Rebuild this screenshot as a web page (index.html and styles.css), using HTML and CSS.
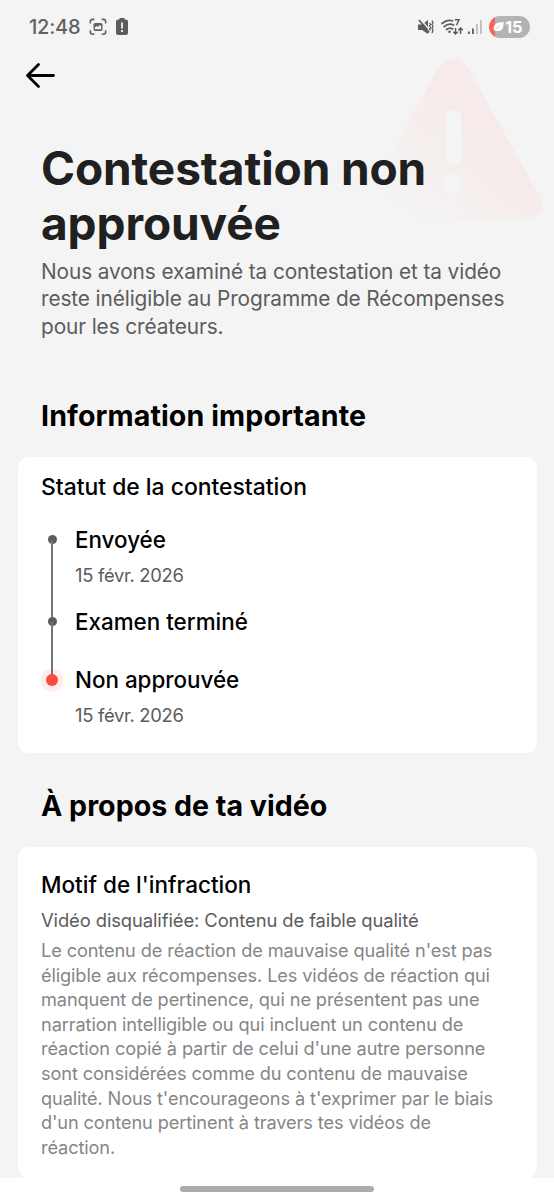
FILE: index.html
```html
<!DOCTYPE html>
<html lang="fr">
<head>
    <meta charset="UTF-8">
    <title>Contestation non approuvée</title>
    <meta name="viewport" content="width=device-width, initial-scale=1.0">
    <link rel="stylesheet" href="styles.css">
</head>
<body>
    <div class="screen">
        <svg class="warning" viewBox="0 0 180 166" aria-hidden="true">
            <defs>
                <linearGradient id="fade" x1="0.15" y1="0.9" x2="0.65" y2="0.4">
                    <stop offset="0" stop-color="#f4f4f4"/>
                    <stop offset="0.5" stop-color="#f5efee"/>
                    <stop offset="1" stop-color="#f6eaea"/>
                </linearGradient>
            </defs>
            <path fill="url(#fade)" d="M75 9Q81 0 90 0T105 9L177 138Q182 148 177 154Q173 160 164 160H17Q7 160 3 154Q-1 147 4 138Z"/>
            <rect x="82" y="52" width="16" height="53" rx="4" fill="#f4f4f4"/>
            <circle cx="90" cy="125" r="10" fill="#f4f4f4"/>
        </svg>

        <div class="status-bar">
            <span class="clock">12:48</span>
            <svg width="18" height="18" viewBox="0 0 20 20">
                <path fill="none" stroke="#626262" stroke-width="1.8" d="M1.5 6V4q0-2.500 2.500-2.500H6M14 1.500h2q2.500 0 2.500 2.500v2M18.500 13.500v2q0 2.500-2.500 2.500h-2M6 18H4q-2.500 0-2.500-2.500v-2"/>
                <rect x="5" y="5.500" width="10" height="9" rx="2" fill="#626262"/>
                <path fill="#f4f4f4" d="M6.500 12.500v-2l2-1.500 1.500 1 2-2.500 1.500 2v3z"/>
            </svg>
            <svg class="battery-alert" width="12" height="17" viewBox="0 0 12 17">
                <path fill="#5c5c5c" d="M3.500 0h5v1.500H10q2 0 2 2V15q0 2-2 2H2q-2 0-2-2V3.500q0-2 2-2h1.500z"/>
                <path stroke="#f4f4f4" stroke-width="1.800" d="M6 4.500v6M6 12v2"/>
            </svg>

            <div class="indicators">
                <svg width="16" height="18" viewBox="0 0 16 18">
                    <path fill="#5c5c5c" d="M0 6.500h4l6-4.500v14l-6-4H0z"/>
                    <path stroke="#f4f4f4" stroke-width="1.200" d="M2.500 1l9 11"/>
                    <path stroke="#5c5c5c" stroke-width="1.800" d="M1 2l10 12.500"/>
                    <path fill="none" stroke="#5c5c5c" stroke-width="1.300" d="M11.500 5l1 1.500-1 1.500 1 1.500-1 1.500 1 1.500M14 2.500l1 2-1 2 1 2-1 2 1 2-1 2.500"/>
                </svg>
                <svg width="22" height="18" viewBox="0 0 22 18">
                    <path fill="none" stroke="#5c5c5c" stroke-width="1.700" stroke-linecap="round" d="M1 5.500Q6 1 11.500 2.800M3.200 8.700Q7.500 4.800 12.500 7M5.500 11.500q3-2.500 6-.5"/>
                    <path fill="none" stroke="#5c5c5c" stroke-width="1.500" d="M13.800 1.800h4.200l-2.500 5.500M14.500 10v6M12.300 13.800l2.200 2.200 2.200-2.200M19.500 16v-6M17.300 12.200l2.200-2.200 2.200 2.200"/>
                    <circle cx="8.500" cy="13.800" r="1.300" fill="#5c5c5c"/>
                </svg>
                <svg width="14" height="18" viewBox="0 0 14 18">
                    <path fill="#5c5c5c" d="M0 13.500h1.800V16H0zM4 10.500h1.800V16H4z"/>
                    <path fill="#bdbdbd" d="M8 6h1.800v10H8zM12 2h1.800v14H12z"/>
                </svg>
                <div class="battery">
                    <svg width="11" height="11" viewBox="0 0 12 12">
                        <path fill="#fff" d="M11.500 1Q12 11 5.500 11H2L1 10Q-1 1 11.500 1Z"/>
                        <path stroke="#bbb" stroke-width="1" d="M1 10.500l6-5.500"/>
                    </svg>
                    <span>15</span>
                </div>
            </div>
        </div>

        <div class="nav">
            <svg width="32" height="28" viewBox="0 0 32 28">
                <path fill="none" stroke="#000" stroke-width="2.800" stroke-linecap="round" stroke-linejoin="round" d="M14.500 3.500L3.500 14.500L14.500 25.500M4 14.500h25.500"/>
            </svg>
        </div>

        <div class="intro">
            <h1>Contestation non<br>approuvée</h1>
            <p>Nous avons examiné ta contestation et ta vidéo<br>reste inéligible au Programme de Récompenses<br>pour les créateurs.</p>
        </div>

        <h2>Information importante</h2>
        <div class="card card-status">
            <h3 class="status-title">Statut de la contestation</h3>
            <ul class="timeline">
                <li>
                    <i class="dot"></i>
                    <strong>Envoyée</strong>
                    <small>15 févr. 2026</small>
                </li>
                <li class="short">
                    <i class="dot"></i>
                    <strong>Examen terminé</strong>
                </li>
                <li>
                    <i class="dot dot-red"></i>
                    <strong>Non approuvée</strong>
                    <small>15 févr. 2026</small>
                </li>
            </ul>
        </div>

        <h2 class="h-video">À propos de ta vidéo</h2>
        <div class="card card-reason">
            <h3>Motif de l'infraction</h3>
            <p class="reason">Vidéo disqualifiée: Contenu de faible qualité</p>
            <p class="detail">Le contenu de réaction de mauvaise qualité n'est pas<br>éligible aux récompenses. Les vidéos de réaction qui<br>manquent de pertinence, qui ne présentent pas une<br>narration intelligible ou qui incluent un contenu de<br>réaction copié à partir de celui d'une autre personne<br>sont considérées comme du contenu de mauvaise<br>qualité. Nous t'encourageons à t'exprimer par le biais<br>d'un contenu pertinent à travers tes vidéos de<br>réaction.</p>
        </div>

        <div class="home-bar"><span></span></div>
    </div>
</body>
</html>
```
FILE: styles.css
```css
* {
    box-sizing: border-box;
}
body {
    margin: 0;
    background: #f4f4f4;
    font-family: Inter, "Liberation Sans", sans-serif;
    color: #000;
}
h1, h2, h3, p, ul {
    margin: 0;
    padding: 0;
    white-space: nowrap;
}
.screen {
    position: relative;
    height: 1200px;
    overflow: hidden;
    display: flex;
    flex-direction: column;
}
.warning {
    position: absolute;
    left: 363px;
    top: 59px;
    width: 180px;
    height: 166px;
}
.status-bar {
    display: flex;
    align-items: center;
    height: 53px;
    padding: 0 24px 0 29px;
}
.clock {
    width: 51px;
    margin-right: 9px;
    font-size: 20px;
    font-weight: 500;
    letter-spacing: -0.2px;
    color: #626262;
    white-space: nowrap;
}
.battery-alert {
    margin-left: 9px;
}
.indicators {
    display: flex;
    align-items: center;
    gap: 5px;
    margin-left: auto;
}
.indicators svg:first-child {
    margin-right: 2px;
}
.battery {
    display: flex;
    align-items: center;
    width: 41px;
    height: 22px;
    margin-left: 2px;
    padding-left: 4px;
    gap: 1px;
    border-radius: 11px;
    background: linear-gradient(90deg, #f9625c 6px, #b3b3b3 6px);
    color: #fff;
    font-size: 16.5px;
    font-weight: 700;
}
.battery svg:first-child {
    margin-right: 0;
}
.nav {
    height: 88px;
    padding: 8px 0 0 24px;
}
.intro {
    position: relative;
    height: 247px;
    padding-left: 41px;
}
h1 {
    margin-bottom: 6.5px;
    font-size: 46px;
    line-height: 55.3px;
    font-weight: 700;
    letter-spacing: -0.1px;
    color: #202020;
}
.intro p {
    font-size: 20.8px;
    line-height: 27.3px;
    letter-spacing: -0.1px;
    color: #5c5c5c;
}
h2 {
    height: 69px;
    padding-left: 41px;
    font-size: 28.6px;
    line-height: 56px;
    font-weight: 700;
    letter-spacing: 0.1px;
}
.card {
    margin: 0 17px 0 18px;
    padding: 0 23px;
    border-radius: 11px;
    background: #fff;
}
.card-status {
    height: 296px;
    padding-top: 15px;
}
h3 {
    font-size: 22.5px;
    line-height: 30px;
    font-weight: 500;
}
.status-title {
    font-size: 22.9px;
}
.timeline {
    margin-top: 22.5px;
    list-style: none;
}
.timeline li {
    position: relative;
    height: 82.5px;
    padding-left: 34px;
}
.timeline li.short {
    height: 57.5px;
}
/* line down to the next step */
.timeline li:not(:last-child)::before {
    content: "";
    position: absolute;
    z-index: 2;
    left: 10px;
    top: 15px;
    width: 2px;
    height: calc(100% - 5px);
    background: #757575;
}
.timeline strong {
    display: block;
    font-size: 22.4px;
    line-height: 30px;
    font-weight: 500;
}
.timeline small {
    display: block;
    margin-top: 7px;
    font-size: 18.4px;
    line-height: 26px;
    letter-spacing: -0.3px;
    color: #5c5c5c;
}
.dot {
    position: absolute;
    z-index: 1;
    left: 6.5px;
    top: 10px;
    width: 9px;
    height: 9px;
    border-radius: 50%;
    background: #5c5c5c;
}
.dot-red {
    left: 5px;
    top: 9px;
    width: 12px;
    height: 12px;
    background: #fe4a38;
    box-shadow: 0 0 0 5.5px #ffeceb;
}
.h-video {
    height: 94px;
    padding-top: 25px;
    letter-spacing: 0;
}
.card-reason {
    height: 331px;
    padding-top: 22.5px;
}
.reason {
    margin-top: 7px;
    font-size: 18.4px;
    line-height: 26px;
    letter-spacing: -0.1px;
    color: #5c5c5c;
}
.detail {
    margin-top: 5.5px;
    font-size: 18.2px;
    line-height: 24.6px;
    letter-spacing: -0.12px;
    color: #868686;
}
.home-bar {
    display: flex;
    justify-content: center;
    height: 22px;
    padding-top: 8px;
    background: #fff;
}
.home-bar span {
    width: 194px;
    height: 6px;
    border-radius: 3px;
    background: #acacac;
}
```
